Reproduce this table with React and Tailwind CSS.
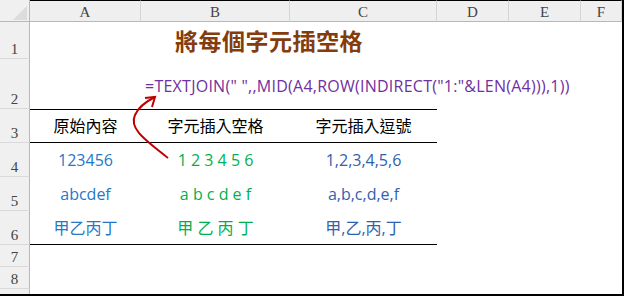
import React from 'react';

const font = { fontFamily: '"Open Sans", "Noto Sans CJK TC", sans-serif' };

const cols = [
  { label: 'A', w: 'w-[111px]' },
  { label: 'B', w: 'w-[149px]' },
  { label: 'C', w: 'w-[147px]' },
  { label: 'D', w: 'w-[72px]' },
  { label: 'E', w: 'w-[72px]' },
  { label: 'F', w: 'flex-1' },
];

const rows = [
  ['123456', '1 2 3 4 5 6', '1,2,3,4,5,6'],
  ['abcdef', 'a b c d e f', 'a,b,c,d,e,f'],
  ['甲乙丙丁', '甲 乙 丙 丁', '甲,乙,丙,丁'],
];

const RowHead = ({ n, h }) => (
  <div className={`w-[30px] ${h} shrink-0 bg-[#f0f0f0] border-r border-r-[#b8b8b8] border-b border-b-[#d9d9d9] flex items-end justify-center text-[15px] leading-[18px] text-[#444] font-['Liberation_Serif',serif]`}>
    {n}
  </div>
);

export default function App() {
  return (
    <div className="relative w-[624px] h-[296px] bg-white border-r-2 border-b-2 border-black overflow-hidden" style={font}>
      {/* column headers */}
      <div className="flex h-[22px]">
        <div className="w-[30px] shrink-0 bg-[#f0f0f0] border-r border-r-[#b8b8b8] border-b border-b-[#b8b8b8] flex items-end justify-end">
          <svg width="18" height="17" viewBox="0 0 18 17"><polygon points="2,16 16,16 16,2" fill="#dcdcdc" /></svg>
        </div>
        {cols.map((c) => (
          <div key={c.label} className={`${c.w} shrink-0 bg-[#efefef] border-t border-t-black border-r border-r-[#d5d5d5] border-b border-b-[#b8b8b8] flex items-center justify-center pt-[2px] text-[15px] text-[#444] font-['Liberation_Serif',serif]`}>
            {c.label}
          </div>
        ))}
      </div>

      {/* row 1 */}
      <div className="flex">
        <RowHead n="1" h="h-[37px]" />
        <div className="flex items-end pl-[145px] pb-[5px] text-[23px] leading-[28px] font-bold text-[#843C0C] tracking-[0.5px]" style={{ fontFamily: '"Noto Sans CJK TC", sans-serif' }}>
          將每個字元插空格
        </div>
      </div>

      {/* row 2 */}
      <div className="flex">
        <RowHead n="2" h="h-[50px]" />
        <div className="flex items-end pl-[115px] pb-[13px] text-[16px] leading-[20px] tracking-[0.25px] text-[#7030A0] whitespace-nowrap">
          =TEXTJOIN(" ",,MID(A4,ROW(INDIRECT("1:"&LEN(A4))),1))
        </div>
      </div>

      {/* row 3 headers */}
      <div className="flex">
        <RowHead n="3" h="h-[34px]" />
        <div className="flex w-[407px] border-t border-b border-black text-[16px] text-black">
          <div className="w-[111px] flex items-center justify-center">原始內容</div>
          <div className="w-[149px] flex items-center justify-center">字元插入空格</div>
          <div className="w-[147px] flex items-center justify-center">字元插入逗號</div>
        </div>
      </div>

      {/* rows 4-6 */}
      {rows.map((r, i) => (
        <div key={i} className="flex">
          <RowHead n={String(i + 4)} h="h-[34px]" />
          <div className={`flex w-[407px] text-[16px] ${i === 2 ? 'border-b border-black' : ''}`}>
            <div className="w-[111px] flex items-center justify-center text-[#2677C8]">{r[0]}</div>
            <div className="w-[149px] flex items-center justify-center text-[#00B050] whitespace-pre">{r[1]}</div>
            <div className="w-[147px] flex items-center justify-center text-[#2F62AE]">{r[2]}</div>
          </div>
        </div>
      ))}

      <div className="flex">
        <RowHead n="7" h="h-[22px]" />
      </div>
      <div className="flex">
        <RowHead n="8" h="h-[22px]" />
      </div>
      <div className="flex">
        <RowHead n="" h="h-[22px]" />
      </div>

      {/* red arrow */}
      <svg className="absolute left-0 top-0 pointer-events-none" width="626" height="296">
        <path d="M168,158 C150,143 128,130 135,115 C139,106 147,101 155,97" fill="none" stroke="#C00000" strokeWidth="2" />
        <path d="M145,98 L155,97 L152,107" fill="none" stroke="#C00000" strokeWidth="2" strokeLinejoin="miter" />
      </svg>
    </div>
  );
}
